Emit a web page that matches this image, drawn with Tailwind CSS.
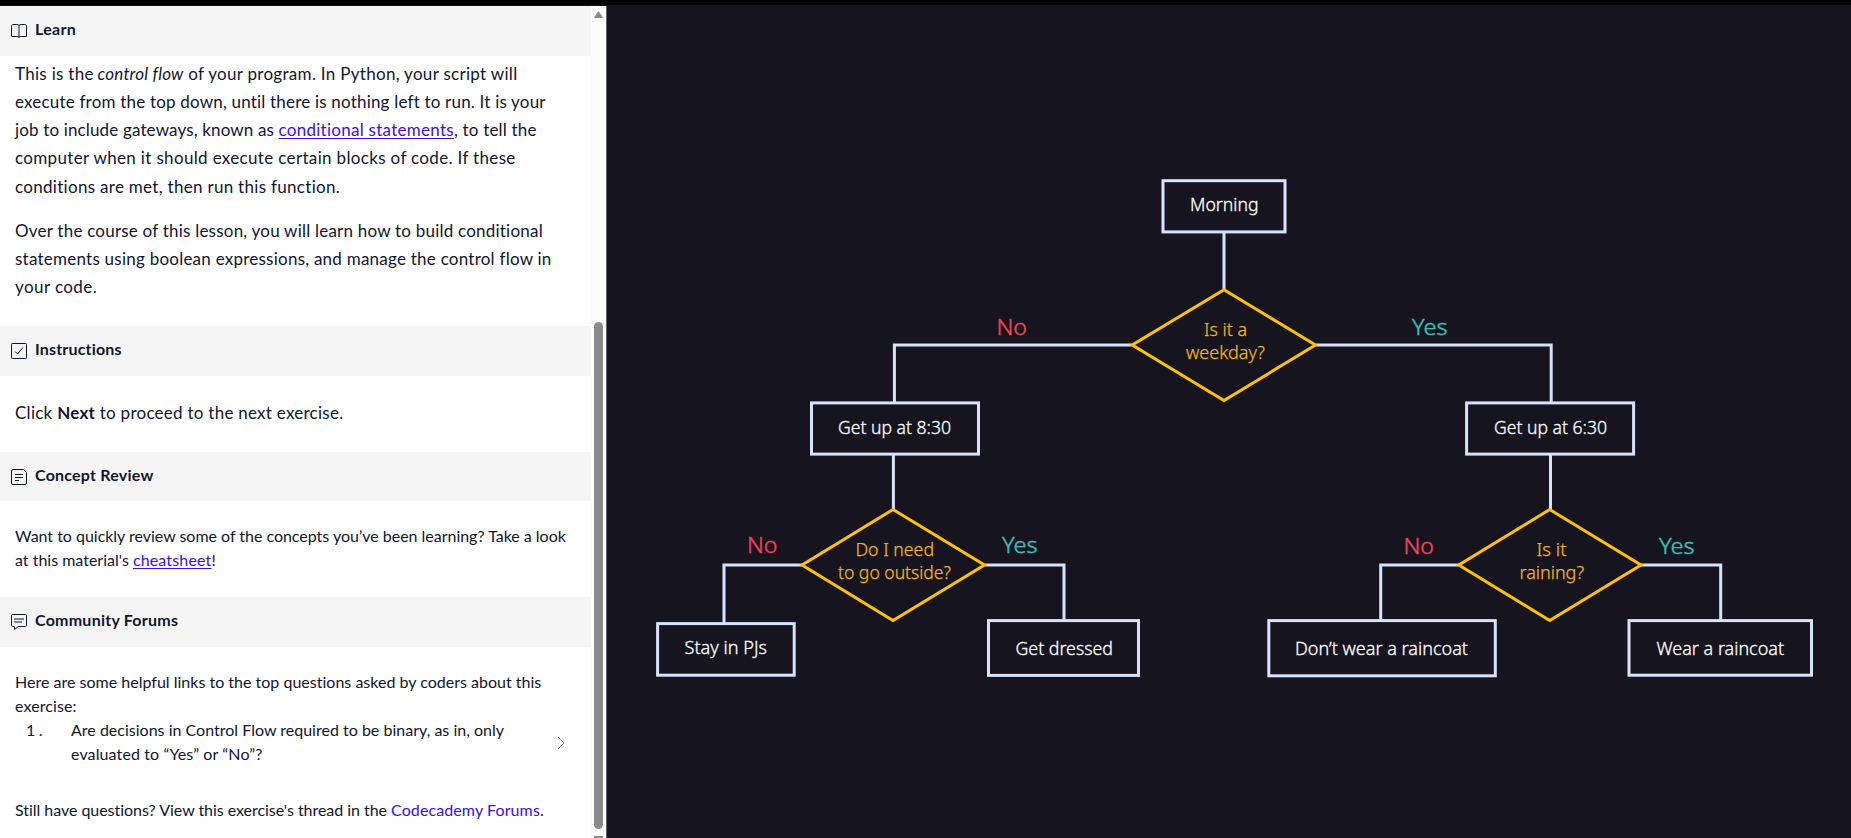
<!DOCTYPE html>
<html lang="en">
<head>
<meta charset="utf-8">
<title>Control Flow</title>
<script src="https://cdn.jsdelivr.net/npm/@tailwindcss/browser@4"></script>
</head>
<body class="w-[1851px] h-[838px] overflow-hidden flex flex-col bg-black">
<div class="h-[5px] shrink-0 bg-black"></div>
<div class="flex flex-1 min-h-0 border-t border-[#15141f] bg-[#15141f]">

  <main class="w-[591px] shrink-0 flex flex-col bg-white text-[#10162f] font-['Lato',sans-serif] whitespace-nowrap">
    <header class="h-[50px] shrink-0 bg-[#f5f5f5] flex items-start gap-2 pl-[11px] pt-[11px]">
      <svg class="mt-[7px] w-4 h-4 shrink-0" viewBox="0 0 16 16" fill="none" stroke="#10162f"><path d="M8 1.500C7.400.8 6.800.5 5.800.5H2.200C1.200.5.5 1.200.5 2.200V12.500H5.800C7 12.500 7.600 12.900 8 13.500C8.400 12.900 9 12.500 10.200 12.500H15.500V2.200C15.500 1.200 14.800.5 13.800.5H10.200C9.200.5 8.600.8 8 1.500V13.500" stroke-width="1"/></svg>
      <h2 class="text-base leading-6 font-bold tracking-[0.29px]">Learn</h2>
    </header>
    <section class="h-[270px] shrink-0 pl-[15px] pt-1 text-[17px] leading-7">
      <p>
        <span class="block tracking-[0.3px]">This is the <em class="tracking-[0.200px] -ml-px">control flow</em> of your program. In Python, your script will</span>
        <span class="block tracking-[0.195px]">execute from the top down, until there is nothing left to run. It is your</span>
        <span class="block tracking-[0.2px]"><span class="tracking-[0.150px]">job to include gateways, known as </span><a class="tracking-[0.270px] text-[#3a10e5] underline underline-offset-2 decoration-1">conditional statements</a>, to tell the</span>
        <span class="block tracking-[0.34px]">computer when it should execute certain blocks of code. If these</span>
        <span class="block tracking-[0.3px] mt-px">conditions are met, then run this function.</span>
      </p>
      <p class="mt-4">
        <span class="block tracking-[0.22px]">Over the course of this lesson, you will learn how to build conditional</span>
        <span class="block tracking-[0.24px]">statements using boolean expressions, and manage the control flow in</span>
        <span class="block tracking-[0.42px]">your code.</span>
      </p>
    </section>

    <header class="h-[50px] shrink-0 bg-[#f5f5f5] flex items-start gap-2 pl-[11px] pt-[11px]">
      <svg class="mt-[6px] w-4 h-4 shrink-0" viewBox="0 0 16 16" fill="none" stroke="#10162f"><rect x=".5" y=".5" width="15" height="15" rx=".8"/><path d="M4 8.500L6.500 11L12 4.500"/></svg>
      <h2 class="text-base leading-6 font-bold tracking-[0.18px]">Instructions</h2>
    </header>
    <section class="h-[76px] shrink-0 pl-[15px] pt-[23px] text-[17px] leading-7">
      <p class="tracking-[0.26px]">Click <strong class="font-bold">Next</strong> to proceed to the next exercise.</p>
    </section>

    <header class="h-[49px] shrink-0 bg-[#f5f5f5] flex items-start gap-2 pl-[11px] pt-[11px]">
      <svg class="mt-[6px] w-4 h-4 shrink-0" viewBox="0 0 16 16" fill="none" stroke="#10162f"><path d="M2 .5H12.500L15.500 3.500V14Q15.500 15.500 14 15.500H2Q.5 15.500.5 14V2Q.5.5 2 .5Z"/><path d="M4 5.500H12M4 8.500H12M4 11.500H8"/></svg>
      <h2 class="text-base leading-6 font-bold tracking-[0.22px]">Concept Review</h2>
    </header>
    <section class="h-[96px] shrink-0 pl-[15px] pt-[23px] text-base leading-6">
      <p>
        <span class="block tracking-[-0.02px]">Want to quickly review some of the concepts you’ve been learning? Take a look</span>
        <span class="block tracking-[0.059px]"><span class="tracking-normal">at this material's </span><a class="tracking-[0.150px] text-[#3a10e5] underline underline-offset-2 decoration-1">cheatsheet</a>!</span>
      </p>
    </section>

    <header class="h-[50px] shrink-0 bg-[#f5f5f5] flex items-start gap-2 pl-[11px] pt-[11px]">
      <svg class="mt-[6px] w-4 h-4 shrink-0" viewBox="0 0 16 16" fill="none" stroke="#10162f"><path d="M1.500.5H14.500Q15.500.5 15.500 1.500V11.500Q15.500 12.500 14.500 12.500H7.500L3.500 15.300V12.500H1.500Q.5 12.500.5 11.500V1.500Q.5.5 1.500.5Z"/><path d="M3 5H13M3 8H11" stroke-width="2" stroke-opacity=".5"/></svg>
      <h2 class="text-base leading-6 font-bold tracking-[0.24px]">Community Forums</h2>
    </header>
    <section class="flex-1 pl-[15px] pt-[23px] text-base leading-6">
      <p>
        <span class="block tracking-[0.008px]">Here are some helpful links to the top questions asked by coders about this</span>
        <span class="block tracking-[0.1px]">exercise:</span>
      </p>
      <div class="flex items-center pr-[26px]">
        <span class="w-[56px] shrink-0 self-start pl-[11px] tracking-[3.500px]">1.</span>
        <p class="flex-1">
          <span class="block tracking-[0.01px]">Are decisions in Control Flow required to be binary, as in, only</span>
          <span class="block tracking-[0.12px]">evaluated to “Yes” or “No”?</span>
        </p>
        <svg class="w-[8px] h-[14px] mt-[2px]" viewBox="0 0 8 14" fill="none" stroke="#888a97"><path d="M1 1L7 7L1 13"/></svg>
      </div>
      <p class="mt-8 tracking-[-0.040px]">Still have questions? View this exercise's thread in the <a class="text-[#3a10e5] tracking-[0.100px]">Codecademy Forums</a>.</p>
    </section>
  </main>

  <!-- Scrollbar -->
  <div class="w-[16px] shrink-0 bg-[#fcfcfc] border-r border-[#5d6078] flex flex-col items-center">
    <svg class="mt-[5px] w-[9px] h-[7px] shrink-0" viewBox="0 0 9 7"><path d="M4.500 0.700L8.500 6.500H.5Z" fill="#8b8b8b" stroke="#8b8b8b" stroke-linejoin="round"/></svg>
    <div class="mt-[304px] w-[9px] h-[507px] shrink-0 rounded-full bg-[#8b8b8b]"></div>
    <div class="mt-[7px] w-[9px] h-[2px] shrink-0 bg-[#8b8b8b]"></div>
  </div>

  <!-- Flowchart -->
  <div class="flex-1 min-w-0 bg-[#15141f]">
    <svg class="block w-[1244px] h-[832px]" viewBox="607 6 1244 832" fill="none" font-family="Noto Sans, Open Sans, sans-serif">
      <g stroke="#d9e2fc" stroke-width="3">
        <path d="M1224 232V290M1132 345H894.400V402M1316 345H1551.200V402M893.400 455V509M1550.500 455V509"/>
        <path d="M802 565H724V623M985 565H1064V620M1459 565H1380.700V620M1641 565H1720.700V620"/>
        <rect x="1163" y="180.700" width="122" height="51.200"/>
        <rect x="811.500" y="402.900" width="167" height="51.200"/>
        <rect x="1466.600" y="402.900" width="167" height="51.200"/>
        <rect x="657.600" y="623.600" width="136.600" height="51.600"/>
        <rect x="988.500" y="620.600" width="150" height="54.800"/>
        <rect x="1268.800" y="620.600" width="226.500" height="55.200"/>
        <rect x="1629" y="620.600" width="182.500" height="54.600"/>
      </g>
      <g stroke="#ffc107" stroke-width="3">
        <path d="M1224 289.700L1315.500 345L1224 400.500L1132.200 345Z"/>
        <path d="M893 509.500L984.500 565L893 620.500L802 565Z"/>
        <path d="M1549.700 509.500L1641 565L1549.700 620.500L1458.800 565Z"/>
      </g>
      <g fill="#fff" stroke="#fff" stroke-width=".3" font-size="18" font-weight="300">
        <text x="1190" y="211" textLength="68.500" lengthAdjust="spacingAndGlyphs">Morning</text>
        <text x="838" y="433.500" textLength="113" lengthAdjust="spacingAndGlyphs">Get up at 8:30</text>
        <text x="1494" y="433.500" textLength="113" lengthAdjust="spacingAndGlyphs">Get up at 6:30</text>
        <text x="684.500" y="654" textLength="82.500" lengthAdjust="spacingAndGlyphs">Stay in PJs</text>
        <text x="1015.500" y="654.500" textLength="97.500" lengthAdjust="spacingAndGlyphs">Get dressed</text>
        <text x="1295" y="654.500" textLength="173" lengthAdjust="spacingAndGlyphs">Don’t wear a raincoat</text>
        <text x="1656.500" y="654.500" textLength="127.500" lengthAdjust="spacingAndGlyphs">Wear a raincoat</text>
      </g>
      <g fill="#f5b80a" stroke="#f5b80a" stroke-width=".25" font-size="18" font-weight="300">
        <text x="1204" y="335.500" textLength="43" lengthAdjust="spacingAndGlyphs">Is it a</text>
        <text x="1186" y="358.500" textLength="79" lengthAdjust="spacingAndGlyphs">weekday?</text>
        <text x="855.500" y="556" textLength="78.500" lengthAdjust="spacingAndGlyphs">Do I need</text>
        <text x="838" y="579" textLength="113" lengthAdjust="spacingAndGlyphs">to go outside?</text>
        <text x="1536.500" y="556" textLength="30" lengthAdjust="spacingAndGlyphs">Is it</text>
        <text x="1519.500" y="579" textLength="64.500" lengthAdjust="spacingAndGlyphs">raining?</text>
      </g>
      <g fill="#fa4359" stroke="#fa4359" stroke-width=".4" font-size="22.500" font-weight="300">
        <text x="996.500" y="335" textLength="30.500" lengthAdjust="spacingAndGlyphs">No</text>
        <text x="747" y="553" textLength="30.500" lengthAdjust="spacingAndGlyphs">No</text>
        <text x="1403.500" y="554" textLength="30.500" lengthAdjust="spacingAndGlyphs">No</text>
      </g>
      <g fill="#37c3be" stroke="#37c3be" stroke-width=".4" font-size="22.500" font-weight="300">
        <text x="1412" y="335" textLength="35.500" lengthAdjust="spacingAndGlyphs">Yes</text>
        <text x="1002" y="553" textLength="35.500" lengthAdjust="spacingAndGlyphs">Yes</text>
        <text x="1659" y="554" textLength="35.500" lengthAdjust="spacingAndGlyphs">Yes</text>
      </g>
    </svg>
  </div>
</div>
</body>
</html>
